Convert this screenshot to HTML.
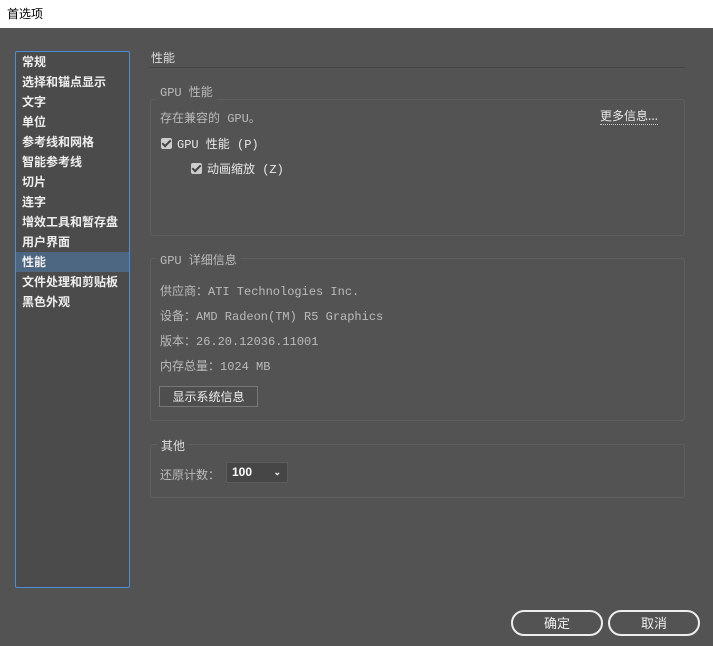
<!DOCTYPE html><html><head><meta charset="utf-8"><style>
*{margin:0;padding:0;box-sizing:border-box}
body{width:713px;height:646px;background:#535353;font-family:"Liberation Mono","Noto Sans CJK SC",monospace;color:#d8d8d8;font-size:12px;position:relative;overflow:hidden}
.a{position:absolute;white-space:nowrap}
.title{left:0;top:0;width:713px;height:28px;background:#fff;color:#000;font-family:"Liberation Sans","Noto Sans CJK SC",sans-serif;font-size:12px;padding:5px 0 0 7px}
.side{left:15px;top:51px;width:115px;height:537px;border:1px solid #4a8fd6;background:#4b4b4b;border-radius:2px}
.side div{height:20px;line-height:20px;padding-left:6px;font-family:"Noto Sans CJK SC",sans-serif;font-weight:bold;color:#eee;font-size:12px}
.side .sel{background:#4d6682}
.box{border:1px solid #5f5f5f;border-radius:3px}
.cb{display:inline-block;width:11px;height:11px;background:#ccc;border-radius:2px;vertical-align:-1px;margin-right:5px;position:relative}
.cb:after{content:"";position:absolute;left:3px;top:0px;width:3px;height:7px;border:solid #444;border-width:0 2px 2px 0;transform:rotate(45deg)}
.cj{font-family:"Noto Sans CJK SC",sans-serif}
.btn{border:2px solid #eee;border-radius:13px;width:92px;height:26px;text-align:center;line-height:22px;color:#eee;font-family:"Noto Sans CJK SC",sans-serif;font-size:13px}
</style></head><body>
<div class="a title">首选项</div>
<div class="a side">
<div>常规</div><div>选择和锚点显示</div><div>文字</div><div>单位</div><div>参考线和网格</div><div>智能参考线</div><div>切片</div><div>连字</div><div>增效工具和暂存盘</div><div>用户界面</div><div class="sel">性能</div><div>文件处理和剪贴板</div><div>黑色外观</div>
</div>
<div class="a cj" style="left:151px;top:49px;font-size:12px;color:#ddd">性能</div>
<div class="a" style="left:148px;top:67px;width:537px;height:1px;background:#464646"></div>
<div class="a box" style="left:150px;top:99px;width:535px;height:137px"></div>
<div class="a" style="left:156px;top:83px;background:#535353;padding:0 4px;color:#bbb">GPU 性能</div>
<div class="a" style="left:160px;top:109px;color:#bbb">存在兼容的 GPU。</div>
<div class="a cj" style="left:600px;top:108px;color:#e8e8e8;border-bottom:1px dotted #ccc;line-height:16px">更多信息...</div>
<div class="a" style="left:161px;top:135px;color:#e8e8e8"><span class="cb"></span>GPU 性能 (P)</div>
<div class="a" style="left:191px;top:160px;color:#e8e8e8"><span class="cb"></span>动画缩放 (Z)</div>
<div class="a box" style="left:150px;top:258px;width:535px;height:163px"></div>
<div class="a" style="left:156px;top:251px;background:#535353;padding:0 4px;color:#bbb">GPU 详细信息</div>
<div class="a" style="left:160px;top:282px;color:#bbb">供应商：ATI Technologies Inc.</div>
<div class="a" style="left:160px;top:307px;color:#bbb">设备：AMD Radeon(TM) R5 Graphics</div>
<div class="a" style="left:160px;top:332px;color:#bbb">版本：26.20.12036.11001</div>
<div class="a" style="left:160px;top:357px;color:#bbb">内存总量：1024 MB</div>
<div class="a cj" style="left:159px;top:386px;width:99px;height:21px;border:1px solid #777;background:#4e4e4e;text-align:center;line-height:19px;color:#eee">显示系统信息</div>
<div class="a box" style="left:150px;top:444px;width:535px;height:54px"></div>
<div class="a cj" style="left:157px;top:437px;background:#535353;padding:0 4px;color:#ddd">其他</div>
<div class="a" style="left:160px;top:466px;color:#bbb">还原计数：</div>
<div class="a" style="left:226px;top:462px;width:62px;height:21px;background:#464646;border:1px solid #5c5c5c;color:#fff;font-weight:bold;padding-left:5px;line-height:19px;font-family:'Liberation Sans',sans-serif">100<span style="position:absolute;right:6px;top:0;font-size:9px">&#8964;</span></div>
<div class="a btn" style="left:511px;top:610px">确定</div>
<div class="a btn" style="left:608px;top:610px">取消</div>
</body></html>
